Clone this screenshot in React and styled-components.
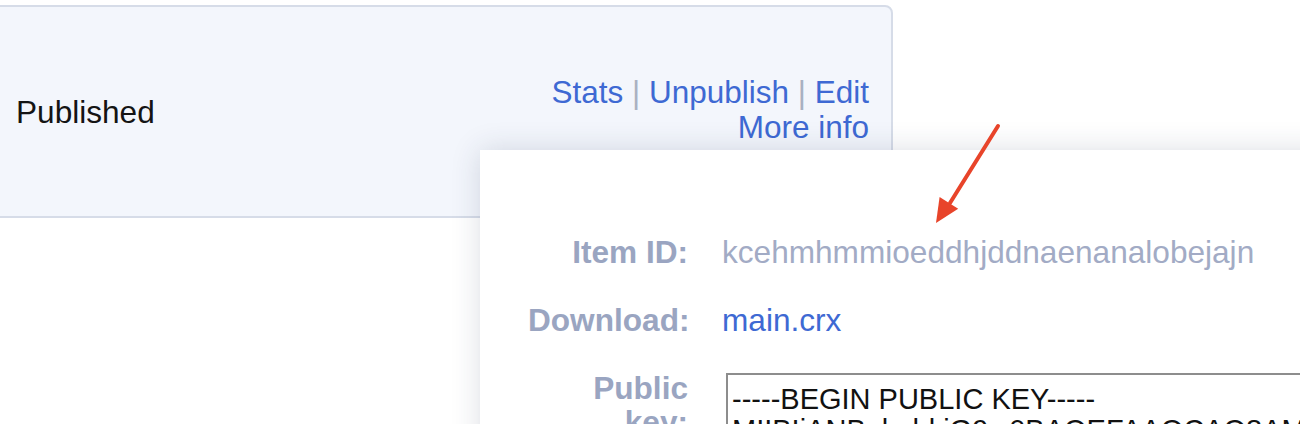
import React from 'react';
import styled, { createGlobalStyle } from 'styled-components';

const GlobalStyle = createGlobalStyle`
  body {
    margin: 0;
    background: #ffffff;
    font-family: "Liberation Sans", Arial, sans-serif;
  }
`;

const Page = styled.div`
  position: relative;
  width: 1300px;
  height: 424px;
  overflow: hidden;
  padding-top: 5px;
  box-sizing: border-box;
`;

const Panel = styled.section`
  display: flex;
  align-items: center;
  justify-content: space-between;
  box-sizing: border-box;
  width: 913px;
  height: 213px;
  margin-left: -20px;
  padding: 0 22px 0 34px;
  background: #f3f6fc;
  border: 2px solid #d6dce8;
  border-radius: 0 8px 0 0;
`;

const Status = styled.span`
  font-size: 31.6px;
  color: #141414;
  margin-top: 2px;
`;

const Actions = styled.div`
  text-align: right;
  font-size: 31.5px;
  line-height: 35px;
  margin-top: -4px;
`;

const ActionLink = styled.a`
  color: #3e69d3;
  text-decoration: none;
`;

const Sep = styled.span`
  color: #a9b1c1;
`;

const Popup = styled.div`
  position: absolute;
  left: 480px;
  top: 150px;
  width: 900px;
  height: 400px;
  box-sizing: border-box;
  padding: 85px 0 0 48px;
  background: #ffffff;
  box-shadow: 0 0 28px rgba(40, 50, 80, 0.16);
  display: grid;
  grid-template-columns: 160px 1fr;
  grid-auto-rows: min-content;
  column-gap: 34px;
  row-gap: 34px;
  font-size: 31.6px;
  line-height: 34px;
`;

const Label = styled.div`
  text-align: right;
  font-weight: bold;
  color: #9aa5c1;
`;

const Value = styled.div`
  color: ${({ $link }) => ($link ? '#3e69d3' : '#a2abc5')};
  white-space: nowrap;
`;

const KeyBox = styled.textarea`
  width: 620px;
  height: 110px;
  margin: 2px 0 0 4px;
  box-sizing: border-box;
  padding: 9px 4px 4px;
  border: 2px solid #8d8d8d;
  font-family: "Liberation Sans", Arial, sans-serif;
  font-size: 29px;
  line-height: 31px;
  color: #111111;
  resize: none;
  overflow: hidden;
  white-space: pre;
`;

const Arrow = styled.svg`
  position: absolute;
  left: 925px;
  top: 118px;
  pointer-events: none;
`;

const publicKey = '-----BEGIN PUBLIC KEY-----\nMIIBIjANBgkqhkiG9w0BAQEFAAOCAQ8AMIIBCgKCAQEA';

export default function App() {
  return (
    <Page>
      <GlobalStyle />
      <Panel>
        <Status>Published</Status>
        <Actions>
          <ActionLink href="#">Stats</ActionLink> <Sep>|</Sep>{' '}
          <ActionLink href="#">Unpublish</ActionLink> <Sep>|</Sep>{' '}
          <ActionLink href="#">Edit</ActionLink>
          <br />
          <ActionLink href="#">More info</ActionLink>
        </Actions>
      </Panel>

      <Popup>
        <Label>Item ID:</Label>
        <Value>kcehmhmmioeddhjddnaenanalobejajn</Value>
        <Label>Download:</Label>
        <Value $link>main.crx</Value>
        <Label>Public key:</Label>
        <KeyBox readOnly value={publicKey} />
      </Popup>

      <Arrow width="80" height="112" viewBox="0 0 80 112">
        <line x1="73" y1="8" x2="25" y2="85" stroke="#e8442a" strokeWidth="4" strokeLinecap="round" />
        <polygon points="11,105 14.6,78.9 33.2,90.7" fill="#e8442a" />
      </Arrow>
    </Page>
  );
}
